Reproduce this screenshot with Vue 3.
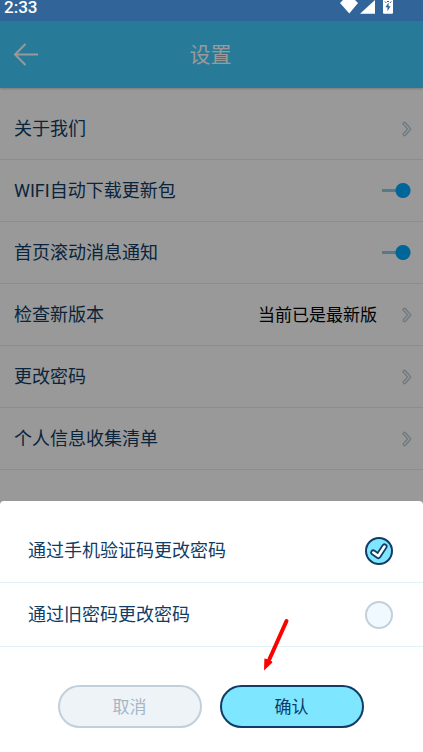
<script setup>
import { reactive, ref } from 'vue'

const items = reactive([
  { id: 'about', label: '关于我们', type: 'link' },
  { id: 'wifi', label: 'WIFI自动下载更新包', type: 'switch', on: true },
  { id: 'notice', label: '首页滚动消息通知', type: 'switch', on: true },
  { id: 'version', label: '检查新版本', type: 'link', value: '当前已是最新版' },
  { id: 'password', label: '更改密码', type: 'link' },
  { id: 'privacy', label: '个人信息收集清单', type: 'link' },
])

const options = [
  { id: 'sms', label: '通过手机验证码更改密码' },
  { id: 'old', label: '通过旧密码更改密码' },
]
const method = ref('sms')
</script>

<template>
  <div class="screen">
    <div class="status">
      <span>2:33</span>
      <svg class="status-icons" viewBox="0 0 60 14" width="60" height="14" aria-hidden="true">
        <path d="M5 0H17L20 3L11.3 13.5L2 3Z" fill="#fff" />
        <path d="M37 0V13.7H22Z" fill="#fff" />
        <path d="M45 0H55V12.5Q55 13.7 54 13.7H46Q45 13.7 45 12.5Z" fill="#fff" />
        <path d="M50.6 2.6L47.4 7.2H49.5V11.2L52.6 6.2H50.6Z" fill="#31659a" />
        <path d="M46.8 1.4L48.4 3M53.4 1.4L52 3M49 1.5H51" stroke="#31659a" />
      </svg>
    </div>

    <div class="page">
      <header class="bar">
        <button class="back" type="button" aria-label="返回">
          <svg viewBox="0 0 26 24" width="26" height="24" fill="none" stroke="currentColor" stroke-width="2">
            <path d="M12.5 1L2 11.5L12.5 22M2 11.5H25" />
          </svg>
        </button>
        <h1>设置</h1>
      </header>

      <ul class="list">
        <li v-for="item in items" :key="item.id">
          <label v-if="item.type === 'switch'" class="row">
            <span>{{ item.label }}</span>
            <input v-model="item.on" class="switch" type="checkbox" role="switch" />
          </label>
          <a v-else class="row" href="#">
            <span>{{ item.label }}</span>
            <span v-if="item.value" class="value">{{ item.value }}</span>
            <svg class="chevron" viewBox="0 0 10 16" width="10" height="16" fill="none" stroke-linecap="round" stroke-linejoin="round">
              <path d="M2.5 2.7L7.3 8L2.5 13.3" stroke="#bccbd6" stroke-width="4" />
              <path d="M2.5 2.7L7.3 8L2.5 13.3" stroke="#edf4f8" stroke-width="1.5" />
            </svg>
          </a>
        </li>
      </ul>

      <div class="mask">
        <form class="sheet" role="dialog" aria-label="更改密码" @submit.prevent>
          <label v-for="option in options" :key="option.id" class="option">
            <span>{{ option.label }}</span>
            <span class="tick">
              <input v-model="method" type="radio" name="method" :value="option.id" />
              <svg v-if="method === option.id" viewBox="0 0 28 28" width="28" height="28" fill="none" stroke-linecap="round" stroke-linejoin="round">
                <path d="M8.3 15.5L13.3 19L19.5 9.5" stroke="#103c66" stroke-width="6" />
                <path d="M8.3 15.5L13.3 19L19.5 9.5" stroke="#fff" stroke-width="2.6" />
              </svg>
            </span>
          </label>
          <div class="actions">
            <button class="btn cancel" type="button">取消</button>
            <button class="btn confirm" type="submit">确认</button>
          </div>
          <svg class="pointer" viewBox="0 0 28 54" width="28" height="54" aria-hidden="true">
            <path d="M24.5 3L7.5 41" stroke="#f00" stroke-width="4" stroke-linecap="round" />
            <path d="M2.4 40.5L5 41L9.5 43L10.4 44.5L2 52.5Z" fill="#f00" />
          </svg>
        </form>
      </div>
    </div>
  </div>
</template>

<style>
body {
  margin: 0;
}
</style>

<style scoped>
.screen {
  display: flex;
  flex-direction: column;
  min-height: 100vh;
  background: #fff;
  color: #103c66;
  font-family: Roboto, "Noto Sans CJK SC", sans-serif;
  font-size: 18px;
  font-weight: 390;
  line-height: 24px;
}

.status {
  display: flex;
  justify-content: space-between;
  align-items: flex-start;
  height: 21px;
  padding: 0 25px 0 4px;
  box-sizing: border-box;
  background: #31659a;
  color: #fff;
  font-size: 17px;
  font-weight: 500;
  line-height: 14px;
}

.page {
  position: relative;
  flex: 1;
  display: flex;
  flex-direction: column;
}

.bar {
  display: grid;
  grid-template-columns: 52px 1fr 54px;
  align-items: center;
  height: 67px;
  background: #43cbff;
  color: #fff;
  box-shadow: 0 1px 2px rgba(0, 0, 0, 0.2);
}

.back {
  display: flex;
  padding: 0 0 0 13px;
  border: 0;
  background: none;
  color: inherit;
}

h1 {
  margin: 0;
  font-size: 21px;
  font-weight: inherit;
  text-align: center;
}

.list {
  margin: 0;
  padding: 10px 0 0;
  list-style: none;
}

.row {
  display: flex;
  align-items: center;
  justify-content: space-between;
  height: 62px;
  padding: 0 11px 0 14px;
  box-sizing: border-box;
  border-bottom: 1px solid #e2eef1;
  color: inherit;
  text-decoration: none;
}

.value {
  margin-left: auto;
  margin-right: 25px;
  color: #000;
  font-size: 17px;
}

.switch {
  appearance: none;
  width: 30px;
  height: 15px;
  margin: 0 1px 0 0;
  background:
    radial-gradient(circle at 8px 50%, #b0bec5 7px, transparent 8px),
    linear-gradient(#dfe6ea, #dfe6ea) right center / 20px 3px no-repeat;
}

.switch:checked {
  background:
    radial-gradient(circle at 22px 50%, #00a8ff 7px, transparent 8px),
    linear-gradient(#8fcbe6, #8fcbe6) 1px center / 20px 3px no-repeat;
}

.mask {
  position: absolute;
  inset: 0;
  display: flex;
  flex-direction: column;
  justify-content: flex-end;
  background: rgba(0, 0, 0, 0.4);
}

.sheet {
  position: relative;
  padding: 18px 0 24px;
  border-radius: 4px 4px 0 0;
  background: #fff;
}

.option {
  display: flex;
  align-items: center;
  justify-content: space-between;
  height: 64px;
  padding: 0 30px 0 28px;
  box-sizing: border-box;
  border-bottom: 1px solid #dff3f6;
}

.tick {
  position: relative;
  display: flex;
}

.tick input {
  appearance: none;
  width: 28px;
  height: 28px;
  margin: 0;
  border: 2px solid #c2d0db;
  border-radius: 50%;
  background: #f0f9fd;
}

.tick input:checked {
  border-color: #103c66;
  background: #7ee6ff;
}

.tick svg {
  position: absolute;
  inset: 0;
  pointer-events: none;
}

.actions {
  display: flex;
  justify-content: center;
  gap: 18px;
  padding: 38px 22px 0 20px;
}

.btn {
  flex: 0 1 144px;
  height: 43px;
  padding: 0;
  border: 2px solid;
  border-radius: 22px;
  font: inherit;
  font-size: 17px;
}

.cancel {
  border-color: #c2d0db;
  background: #eef3f8;
  color: #a5b6c4;
}

.confirm {
  border-color: #103c66;
  background: #7ee6ff;
  color: #103c66;
}

.pointer {
  position: absolute;
  left: 62%;
  bottom: 80px;
}
</style>
